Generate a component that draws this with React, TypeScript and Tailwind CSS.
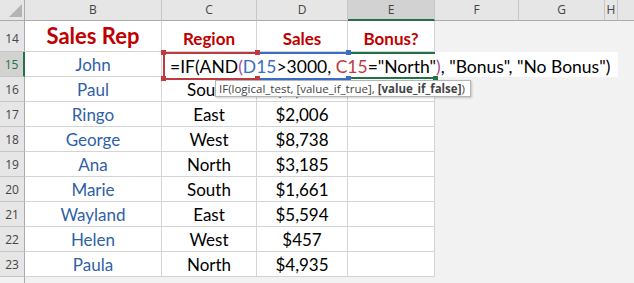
import React from 'react';

// Sheet data (rows 14..23)
type Row = { n: number; rep: string; region: string; sales: string };

const rows: Row[] = [
    { n: 15, rep: 'John', region: '', sales: '' },
    { n: 16, rep: 'Paul', region: 'South', sales: '$1,523' },
    { n: 17, rep: 'Ringo', region: 'East', sales: '$2,006' },
    { n: 18, rep: 'George', region: 'West', sales: '$8,738' },
    { n: 19, rep: 'Ana', region: 'North', sales: '$3,185' },
    { n: 20, rep: 'Marie', region: 'South', sales: '$1,661' },
    { n: 21, rep: 'Wayland', region: 'East', sales: '$5,594' },
    { n: 22, rep: 'Helen', region: 'West', sales: '$457' },
    { n: 23, rep: 'Paula', region: 'North', sales: '$4,935' },
];

const hdrFont = { fontFamily: '"Open Sans", "Liberation Sans", sans-serif' };
const cellFont = { fontFamily: 'Lato, "Liberation Sans", sans-serif' };

const ColHeader = ({ label, w, selected }: { label: string; w: string; selected?: boolean }) => (
    <div
        className={`${w} h-full flex items-center justify-center border-r border-[#c6c6c6] text-[12px] text-[#444] ${
            selected ? 'bg-[#d2d2d2] border-b-2 border-b-[#217346]' : 'border-b border-b-[#ababab]'
        }`}
    >
        {label}
    </div>
);

const Handle = ({ className }: { className: string }) => (
    <div className={`absolute w-[5px] h-[5px] ${className}`} />
);

export default function App() {
    return (
        <div className="relative w-[634px] h-[283px] overflow-hidden bg-[#f2f2f2]" style={cellFont}>
            {/* column headers */}
            <div className="flex h-[21px] bg-[#e6e6e6]" style={hdrFont}>
                <div className="w-[25px] h-full border-r border-b border-[#ababab] relative">
                    <svg width="25" height="21" className="absolute left-0 top-0">
                        <polygon points="22,4 22,17 9,17" fill="#b4b4b4" />
                    </svg>
                </div>
                <ColHeader label="B" w="w-[137px]" />
                <ColHeader label="C" w="w-[95px]" />
                <ColHeader label="D" w="w-[91px]" />
                <ColHeader label="E" w="w-[87px]" selected />
                <ColHeader label="F" w="w-[84px]" />
                <ColHeader label="G" w="w-[86px]" />
                <ColHeader label="H" w="w-[13px]" />
                <div className="flex-1 h-full border-b border-[#ababab]" />
            </div>

            {/* row 14: titles */}
            <div className="flex h-[31px]">
                <div
                    className="w-[25px] flex items-end justify-center pb-[3px] bg-[#e6e6e6] border-r border-r-[#ababab] border-b border-b-[#c6c6c6] text-[12px] text-[#444]"
                    style={hdrFont}
                >
                    14
                </div>
                <div className="w-[137px] flex items-end justify-center pb-[4px] bg-white border-r border-b border-[#d4d4d4] text-[22px] leading-none font-bold text-[#c00000]">
                    Sales Rep
                </div>
                <div className="w-[95px] flex items-end justify-center pb-[4px] bg-white border-r border-b border-[#d4d4d4] text-[17px] leading-none font-bold text-[#c00000]">
                    Region
                </div>
                <div className="w-[91px] flex items-end justify-center pb-[4px] bg-white border-r border-b border-[#d4d4d4] text-[17px] leading-none font-bold text-[#c00000]">
                    Sales
                </div>
                <div className="w-[87px] flex items-end justify-center pb-[4px] bg-white border-r border-b border-[#d4d4d4] text-[17px] leading-none font-bold text-[#c00000]">
                    Bonus?
                </div>
                <div className="flex-1" />
            </div>

            {/* rows 15..23 */}
            {rows.map((r) => {
                const sel = r.n === 15;
                return (
                    <div key={r.n} className="flex h-[25px]">
                        <div
                            className={`w-[25px] flex items-end justify-center pb-[2px] border-b border-b-[#c6c6c6] text-[12px] ${
                                sel
                                    ? 'bg-[#d2d2d2] text-[#217346] border-r-2 border-r-[#217346]'
                                    : 'bg-[#e6e6e6] text-[#444] border-r border-r-[#ababab]'
                            }`}
                            style={hdrFont}
                        >
                            {r.n}
                        </div>
                        <div className="w-[137px] flex items-center justify-center pt-[2px] bg-white border-r border-b border-[#d4d4d4] text-[17px] text-[#2f5fa8]">
                            {r.rep}
                        </div>
                        <div className="w-[95px] flex items-center justify-center pt-[2px] bg-white border-r border-b border-[#d4d4d4] text-[17px] text-black">
                            {r.region}
                        </div>
                        <div className="w-[91px] flex items-center justify-center pt-[2px] bg-white border-r border-b border-[#d4d4d4] text-[17px] text-black">
                            {r.sales}
                        </div>
                        <div className="w-[87px] bg-white border-r border-b border-[#d4d4d4]" />
                        <div className="flex-1" />
                    </div>
                );
            })}

            {/* strip below row 23 */}
            <div className="flex h-[6px]">
                <div className="w-[25px] border-r border-[#ababab]" />
            </div>

            {/* in-cell formula editor overlay */}
            <div className="absolute left-[165px] top-[52px] w-[453px] h-[25px] bg-white" />
            {/* reference boxes */}
            <div className="absolute left-[163px] top-[52px] w-[2px] h-[28px] bg-[#c0393f]" />
            <div className="absolute left-[163px] top-[52px] w-[94px] h-[2px] bg-[#c0393f]" />
            <div className="absolute left-[163px] top-[78px] w-[94px] h-[2px] bg-[#c0393f]" />
            <div className="absolute left-[257px] top-[52px] w-[91px] h-[2px] bg-[#3b6cc6]" />
            <div className="absolute left-[257px] top-[78px] w-[91px] h-[2px] bg-[#3b6cc6]" />
            <div className="absolute left-[348px] top-[52px] w-[87px] h-[2px] bg-[#217346]" />
            <div className="absolute left-[348px] top-[77px] w-[87px] h-[2px] bg-[#217346]" />
            <Handle className="left-[161px] top-[50px] bg-[#c0393f]" />
            <Handle className="left-[161px] top-[76px] bg-[#c0393f]" />
            <Handle className="left-[255px] top-[50px] bg-[#c0393f]" />
            <Handle className="left-[255px] top-[76px] bg-[#c0393f]" />
            <Handle className="left-[346px] top-[50px] bg-[#3b6cc6]" />
            <Handle className="left-[346px] top-[76px] bg-[#3b6cc6]" />
            <Handle className="left-[433px] top-[76px] bg-[#217346]" />

            <div className="absolute left-[170px] top-[54px] leading-[25px] text-[17.5px] text-black whitespace-pre">
                =IF(AND<span className="text-[#a84a9c]">(</span>
                <span className="text-[#3b6cc6]">D15</span>
                {'>3000, '}
                <span className="text-[#c0393f]">C15</span>
                {'="North"'}
                <span className="text-[#a84a9c]">)</span>
                {', "Bonus", "No Bonus")'}
            </div>

            {/* function tooltip */}
            <div
                className="absolute left-[215px] top-[80px] w-[256px] h-[17px] flex items-center pl-[3px] bg-white border border-[#b5b5b5] shadow-[1px_1px_2px_rgba(0,0,0,0.2)] text-[11.5px] text-[#444] whitespace-pre"
                style={hdrFont}
            >
                {'IF(logical_test, [value_if_true], '}
                <span className="font-bold">[value_if_false]</span>)
            </div>
        </div>
    );
}
